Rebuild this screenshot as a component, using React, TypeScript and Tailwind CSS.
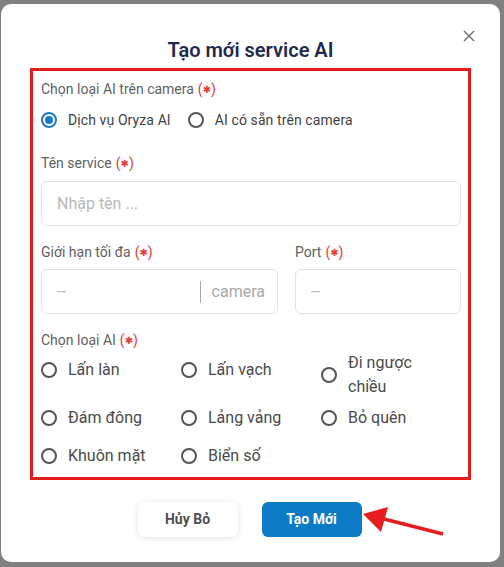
import { useState } from 'react';

const aiTypes = ['Lấn làn', 'Lấn vạch', 'Đi ngược chiều', 'Đám đông', 'Lảng vảng', 'Bỏ quên', 'Khuôn mặt', 'Biển số'];

function Required() {
  return <span className="text-[#e53935] ml-[4px]">(<span className="text-[10px] align-[1px] font-['DejaVu_Sans',sans-serif]">✱</span>)</span>;
}

function Radio({ checked }: { checked: boolean }) {
  return checked ? (
    <span className="w-[16px] h-[16px] shrink-0 rounded-full border-2 border-[#1976d2] flex items-center justify-center">
      <span className="w-[8px] h-[8px] rounded-full bg-[#1976d2]" />
    </span>
  ) : (
    <span className="w-[16px] h-[16px] shrink-0 rounded-full border-2 border-[#555]" />
  );
}

export default function App() {
  const [source, setSource] = useState('oryza');
  const [aiType, setAiType] = useState('');

  return (
    <div className="relative h-[567px] w-[504px] bg-[#808080] pt-[4px] pl-[1px] font-['Roboto',sans-serif]">
      <div className="relative w-[499px] h-[558px] bg-white rounded-[10px] px-[40px] pt-[32px]">
        <button className="absolute right-[21px] top-[22px] w-[20px] h-[20px] flex items-center justify-center">
          <svg width="12" height="12" viewBox="0 0 12 12" stroke="#6b6b6b" strokeWidth="1.4">
            <path d="M1 1 L11 11 M11 1 L1 11" />
          </svg>
        </button>

        <h1 className="text-center text-[20px] leading-[28px] font-semibold text-[#1f2b4d] mb-[4px]">Tạo mới service AI</h1>

        <div className="-mx-[11px] border-[3px] border-[#e31c1c] pl-[8px] pr-[7px] pt-[8px] pb-[2px]">
          <div className="text-[14px] leading-[20px] text-[#5f5f5f]">Chọn loại AI trên camera<Required /></div>
          <div className="mt-[10px] flex items-center h-[20px] text-[14px] text-[#3f3f3f] tracking-[0.1px]">
            <label className="flex items-center gap-[11px] cursor-pointer" onClick={() => setSource('oryza')}>
              <Radio checked={source === 'oryza'} />
              <span>Dịch vụ Oryza AI</span>
            </label>
            <label className="ml-[17px] flex items-center gap-[11px] cursor-pointer" onClick={() => setSource('camera')}>
              <Radio checked={source === 'camera'} />
              <span>AI có sẵn trên camera</span>
            </label>
          </div>

          <div className="mt-[23px] text-[14px] leading-[20px] text-[#5f5f5f]">Tên service<Required /></div>
          <div className="mt-[7px] h-[45px] border border-[#e2e2e2] rounded-[6px] flex items-center px-[15px]">
            <input placeholder="Nhập tên ..." className="w-full outline-none text-[16px] text-[#333] placeholder:text-[#b8b8b8]" />
          </div>

          <div className="mt-[16px] flex gap-[17px]">
            <div className="w-[237px]">
              <div className="text-[14px] leading-[20px] text-[#5f5f5f]">Giới hạn tối đa<Required /></div>
              <div className="mt-[6px] h-[45px] border border-[#e2e2e2] rounded-[6px] flex items-center pl-[15px] pr-[12px]">
                <input placeholder="--" className="flex-1 min-w-0 outline-none text-[16px] text-[#333] placeholder:text-[#b8b8b8]" />
                <span className="w-px h-[22px] bg-[#a8a8a8] mx-[11px]" />
                <span className="text-[16px] text-[#a8a8a8]">camera</span>
              </div>
            </div>
            <div className="flex-1">
              <div className="text-[14px] leading-[20px] text-[#5f5f5f]">Port<Required /></div>
              <div className="mt-[6px] h-[45px] border border-[#e2e2e2] rounded-[6px] flex items-center px-[15px]">
                <input placeholder="--" className="w-full outline-none text-[16px] text-[#333] placeholder:text-[#b8b8b8]" />
              </div>
            </div>
          </div>

          <div className="mt-[16px] text-[14px] leading-[20px] text-[#5f5f5f]">Chọn loại AI<Required /></div>
          <div className="grid grid-cols-3 items-start">
            {aiTypes.map(t => (
              <label key={t} className="flex items-center gap-[11px] min-h-[38px] cursor-pointer" onClick={() => setAiType(t)}>
                <Radio checked={aiType === t} />
                <span className="text-[16px] leading-[24px] text-[#4a4a4a] max-w-[84px]">{t}</span>
              </label>
            ))}
          </div>
        </div>

        <div className="mt-[22px] flex justify-center gap-[24px] pr-[2px]">
          <button className="w-[100px] h-[35px] rounded-[6px] bg-white shadow-[0_1px_6px_rgba(0,0,0,0.12)] text-[14px] font-bold text-[#4f4f4f]">Hủy Bỏ</button>
          <button className="w-[100px] h-[35px] rounded-[6px] bg-[#0a7bc4] text-[14px] font-bold text-white">Tạo Mới</button>
        </div>
      </div>

      <svg className="absolute left-0 top-0 pointer-events-none" width="504" height="567" viewBox="0 0 504 567">
        <line x1="384" y1="519" x2="443" y2="534" stroke="#e41e1e" strokeWidth="3.5" />
        <polygon points="363,514 388,507 381,532" fill="#e41e1e" />
      </svg>
    </div>
  );
}
